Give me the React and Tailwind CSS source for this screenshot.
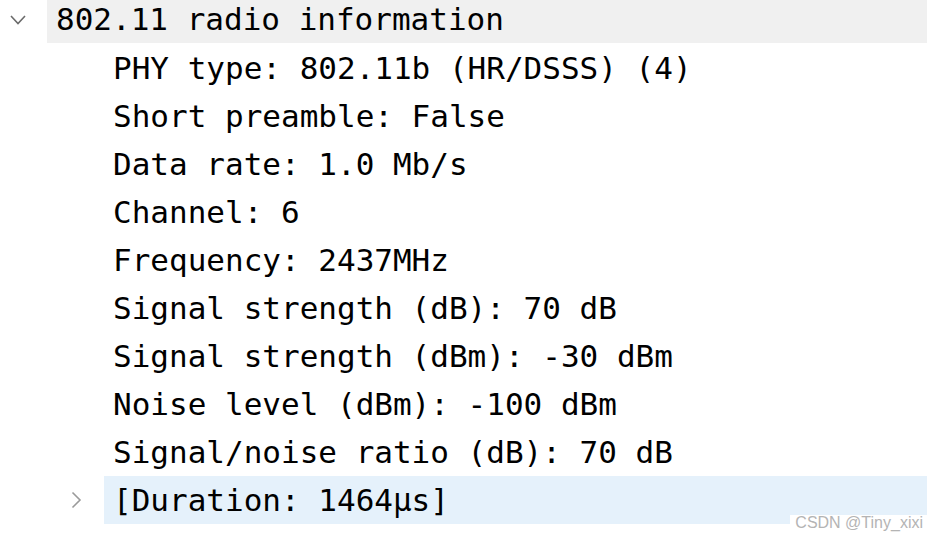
const fields = [
  "PHY type: 802.11b (HR/DSSS) (4)",
  "Short preamble: False",
  "Data rate: 1.0 Mb/s",
  "Channel: 6",
  "Frequency: 2437MHz",
  "Signal strength (dB): 70 dB",
  "Signal strength (dBm): -30 dBm",
  "Noise level (dBm): -100 dBm",
  "Signal/noise ratio (dB): 70 dB",
];

const mono = { fontFamily: "'DejaVu Sans Mono', 'Liberation Mono', monospace" };

export default function App() {
  return (
    <div className="relative h-[534px] w-[927px] overflow-hidden bg-white text-[31px] text-black" style={mono}>
      {/* expanded header */}
      <div className="flex h-[43px]">
        <div className="flex w-[47px] items-start justify-start pl-[10px] pt-[15px]">
          <svg width="16" height="10" viewBox="0 0 16 10" fill="none">
            <path d="M1 1l7 7.5L15 1" stroke="#6b6b6b" strokeWidth="1.6" />
          </svg>
        </div>
        <div className="flex flex-1 items-center bg-[#f0f0f0] pb-[4px] pl-[9px] leading-none whitespace-pre">
          802.11 radio information
        </div>
      </div>

      {/* child fields */}
      <div className="mt-[1px] flex flex-col">
        {fields.map((f) => (
          <div key={f} className="flex h-12 items-center pl-[113px] leading-none whitespace-pre">
            {f}
          </div>
        ))}

        <div className="flex h-12 items-center">
          <div className="flex w-[104px] items-center justify-start pl-[71px]">
            <svg width="11" height="18" viewBox="0 0 11 18" fill="none">
              <path d="M1.5 1.5l7.5 7.5-7.5 7.5" stroke="#9a9a9a" strokeWidth="1.6" />
            </svg>
          </div>
          <div className="flex h-full flex-1 items-center bg-[#e5f1fb] pl-[9px] leading-none whitespace-pre">
            [Duration: 1464μs]
          </div>
        </div>
      </div>

      {/* watermark */}
      <div
        className="absolute right-0 bottom-0 flex h-[19px] w-[137px] items-start justify-end bg-white pr-[4px] text-[16px] leading-[16px] text-[#b4b4b4]"
        style={{ fontFamily: "'Liberation Sans', Arial, sans-serif" }}
      >
        CSDN @Tiny_xixi
      </div>
    </div>
  );
}
